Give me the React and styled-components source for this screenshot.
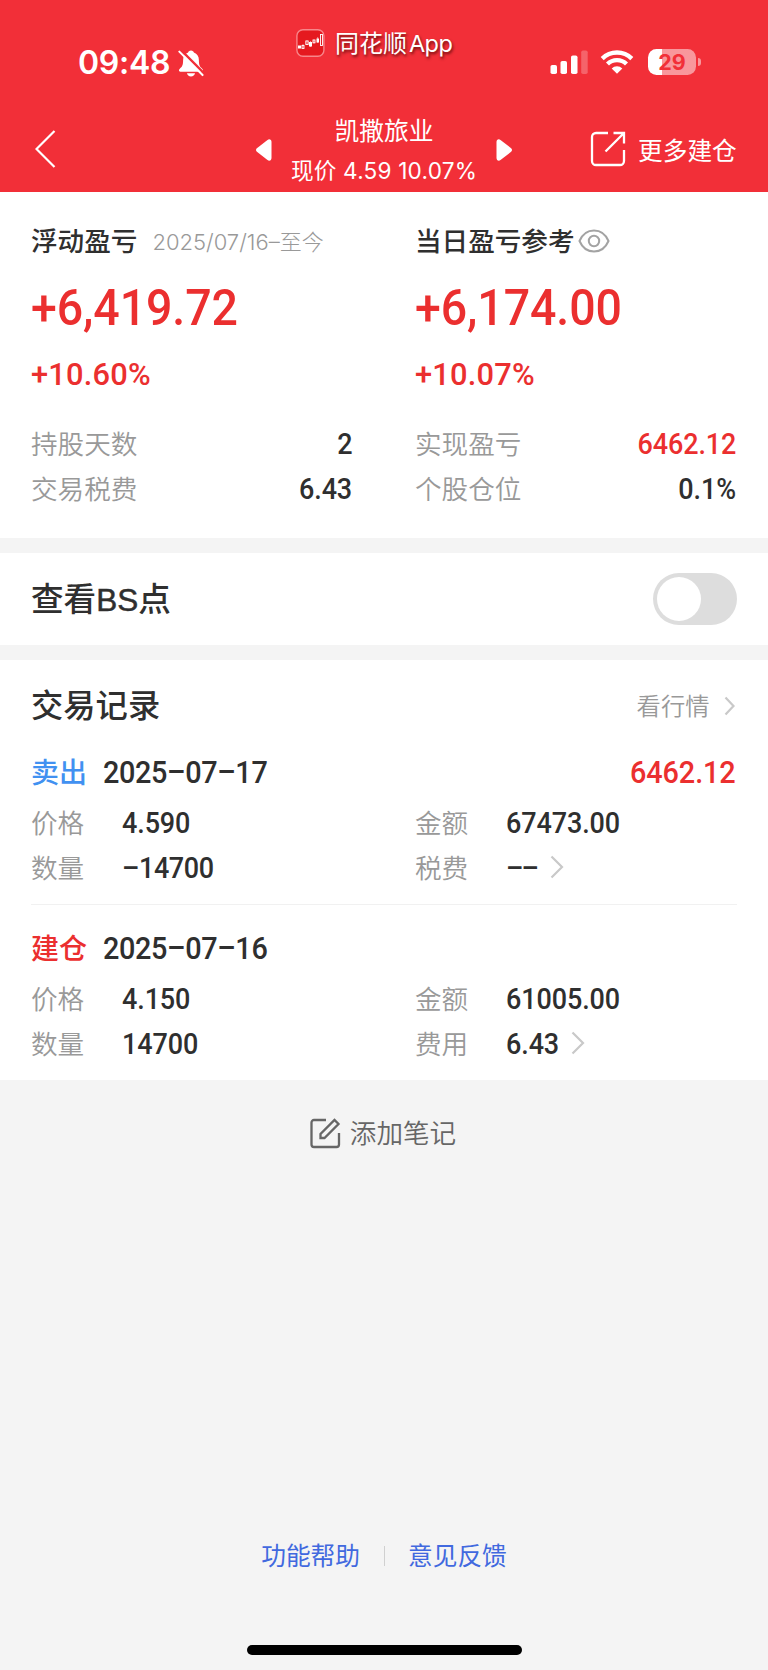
import React, { useState } from "react";
import styled, { createGlobalStyle } from "styled-components";

const cjk = '"Noto Sans CJK SC"';
const ui = `Inter, ${cjk}, sans-serif`;
const din = `Roboto, ${cjk}, sans-serif`;
const c = {
  brand: "#f22f38",
  red: "#eb2f2f",
  blue: "#4191f1",
  link: "#4169df",
  ink: "#2f2f2f",
  gray: "#999999",
  note: "#666666",
  bg: "#f4f4f4",
};

const Global = createGlobalStyle`
  * { box-sizing: border-box; }
  body { margin: 0; background: ${c.bg}; font-family: ${ui}; color: ${c.ink}; }
  svg { display: block; flex: none; }
`;

const Screen = styled.main`
  width: 768px;
  height: 1670px;
  display: flex;
  flex-direction: column;
  background: ${c.bg};
  white-space: nowrap;
  overflow: hidden;
`;

/* ---------- header ---------- */
const Header = styled.header`
  height: 192px;
  flex: none;
  background: ${c.brand};
  color: #fff;
`;
const StatusBar = styled.div`
  height: 108px;
  display: grid;
  grid-template-columns: 296px 1fr 218px;
`;
const Clock = styled.div`
  display: flex;
  align-items: center;
  gap: 8px;
  padding: 18px 0 0 78px;
  font-size: 32px;
  font-weight: 600;
  line-height: 40px;
  letter-spacing: -0.3px;
`;
const AppMark = styled.div`
  display: flex;
  align-items: center;
  gap: 10px;
  height: 28px;
  margin-top: 29px;
  font-size: 24px;
  text-shadow: 1px 2px 3px rgba(60, 0, 0, 0.75);
`;
const AppName = styled.span`
  margin-top: -3px;
`;
const AppLatin = styled.span`
  font-size: 23.5px;
  margin-left: 2px;
  letter-spacing: -0.6px;
`;
const Indicators = styled.div`
  display: flex;
  align-items: flex-start;
  padding-top: 49px;
`;
const WifiIcon = styled.svg`
  margin-left: 12px;
`;
const Battery = styled.div`
  width: 48px;
  height: 26px;
  margin-left: 14px;
  border-radius: 8.5px;
  display: grid;
  place-items: center;
  background: linear-gradient(90deg, #fff 14px, rgba(255, 255, 255, 0.5) 14px);
  color: ${c.brand};
  font-size: 21.5px;
  font-weight: 700;
  line-height: 26px;
`;
const BatteryTip = styled.div`
  width: 3px;
  height: 8px;
  margin: 9px 0 0 1.5px;
  border-radius: 0 3px 3px 0;
  background: rgba(255, 255, 255, 0.5);
`;
const NavBar = styled.nav`
  height: 84px;
  display: grid;
  grid-template-columns: 254px 1fr 254px;
`;
const Back = styled.button`
  border: 0;
  padding: 22px 0 0 35px;
  background: none;
  display: flex;
  align-items: flex-start;
`;
const StockPicker = styled.div`
  display: flex;
  justify-content: space-between;
`;
const Arrow = styled.svg`
  margin-top: 31px;
  transform: ${(p) => (p.$flip ? "scaleX(-1)" : "none")};
`;
const Stock = styled.div`
  display: flex;
  flex-direction: column;
  align-items: center;
  padding-top: 3px;
`;
const StockName = styled.div`
  font-size: 24.8px;
  line-height: 40px;
`;
const StockPrice = styled.div`
  font-size: 22.6px;
  line-height: 40px;
  letter-spacing: 0.2px;
`;
const MoreLink = styled.div`
  display: flex;
  align-items: center;
  gap: 12px;
  height: 36px;
  margin: 23px 0 0 76px;
  font-size: 24.7px;
`;
const MoreText = styled.span`
  margin-top: -1px;
`;

/* ---------- shared ---------- */
const Panel = styled.section`
  flex: none;
  height: ${(p) => p.$h}px;
  margin-bottom: ${(p) => p.$gap || 0}px;
  background: #fff;
  padding: 0 32px 0 31px;
`;
const Columns = styled.div`
  display: grid;
  grid-template-columns: 384px 1fr;
`;
const Line = styled.div`
  display: flex;
  align-items: center;
  justify-content: ${(p) => (p.$split ? "space-between" : "flex-start")};
  height: ${(p) => p.$h}px;
`;
const Label = styled.span`
  margin-top: -3px;
  font-size: 26.6px;
  font-weight: 350;
  color: ${c.gray};
  width: ${(p) => (p.$fixed ? "91px" : "auto")};
`;
const Heading = styled.h2`
  margin: ${(p) => (p.$size > 30 ? -5 : -3)}px 0 0;
  font-size: ${(p) => p.$size}px;
  font-weight: 500;
`;
const Latin = styled.span`
  font-family: "Liberation Sans", Arial, sans-serif;
  font-size: 31.5px;
  -webkit-text-stroke: 0.5px currentColor;
`;
/* slightly condensed figures; anchored to the edge they align with */
const Num = styled.span`
  font-family: ${din};
  font-size: ${(p) => p.$size || 29}px;
  font-weight: 500;
  letter-spacing: ${(p) => p.$ls ?? -0.1}px;
  color: ${(p) => (p.$red ? c.red : c.ink)};
  transform: scaleX(${(p) => p.$stretch || 0.93});
  transform-origin: ${(p) => (p.$end ? "right" : "left")} center;
`;

/* ---------- summary ---------- */
const Metric = styled.div`
  padding-top: 24px;
  width: 321px;
`;
const Range = styled.span`
  margin: -3px 0 0 15px;
  font-size: 22px;
  font-weight: 300;
  color: ${c.gray};
`;
const Rows = styled.div`
  padding-top: 24px;
`;
const EyeIcon = styled.svg`
  margin-left: 3px;
`;

/* ---------- switch ---------- */
const Switch = styled.button`
  width: 84px;
  height: 52px;
  margin-right: -1px;
  padding: 4px;
  border: 0;
  border-radius: 26px;
  background: #ddd;
  display: flex;
  justify-content: ${(p) => (p.$on ? "flex-end" : "flex-start")};
`;
const Knob = styled.span`
  width: 44px;
  height: 44px;
  border-radius: 50%;
  background: #fff;
`;

/* ---------- records ---------- */
const Quote = styled.div`
  display: flex;
  align-items: center;
  gap: 14px;
  padding-right: 1px;
  font-size: 24.3px;
  font-weight: 350;
  color: ${c.gray};
`;
const QuoteText = styled.span`
  margin-top: -2px;
`;
const Record = styled.article`
  height: ${(p) => p.$h}px;
  margin: ${(p) => p.$top}px -1px 0 0;
  border-bottom: ${(p) => (p.$rule ? "1px solid #f1f1f1" : "0")};
`;
const Side = styled.span`
  width: 72px;
  margin-top: -2px;
  font-size: 28px;
  font-weight: 500;
  color: ${(p) => (p.$sell ? c.blue : c.red)};
`;
const Grow = styled.span`
  flex: 1;
`;
const Profit = styled.span`
  display: flex;
  margin-right: 1px;
`;
const Chevron = styled.svg`
  margin-left: ${(p) => p.$ml || 0}px;
  margin-top: ${(p) => p.$mt || 0}px;
`;

/* ---------- bottom ---------- */
const AddNote = styled.div`
  height: 106px;
  display: flex;
  align-items: center;
  justify-content: center;
  gap: 9px;
  padding-right: 2px;
  font-size: 26.6px;
  font-weight: 350;
  color: ${c.note};
`;
const NoteText = styled.span`
  margin-top: -3px;
`;
const Footer = styled.footer`
  margin-top: auto;
  height: 136px;
  display: flex;
  flex-direction: column;
  align-items: center;
  justify-content: space-between;
  padding-bottom: 15px;
`;
const Links = styled.div`
  display: flex;
  align-items: center;
  gap: 23.5px;
  height: 40px;
  font-size: 24.7px;
  color: ${c.link};
`;
const Bar = styled.i`
  width: 1px;
  height: 20px;
  margin-top: 3px;
  background: #d0d0d0;
`;
const HomeBar = styled.div`
  width: 275px;
  height: 10px;
  border-radius: 5px;
  background: #000;
`;

function MiniChevron({ w, h, ml, mt }) {
  return (
    <Chevron $ml={ml} $mt={mt} width={w + 3} height={h + 3} fill="none" stroke="#c9c9c9" strokeWidth={2.2}>
      <path d={`M1.5 1.5 L${w + 1} ${h / 2 + 1.5} L1.5 ${h + 1.5}`} />
    </Chevron>
  );
}

function BellOff() {
  return (
    <svg width="26" height="27" viewBox="0 0 27 28" fill="#fff">
      <path d="M13.500 0.500c-1.700 0-2.800 1-3 2.200C7 4 5.300 6.800 5.300 10.500c0 4.800-1 6.600-2.800 8.300C1.600 19.700 1 20.600 1 21.300c0 .8.600 1.200 1.400 1.200h22.200c.8 0 1.400-.4 1.400-1.200 0-.7-.6-1.600-1.500-2.500-1.800-1.700-2.800-3.500-2.800-8.300 0-3.700-1.700-6.500-5.200-7.800-.2-1.200-1.300-2.200-3-2.200z" />
      <path d="M9.300 24.200h8.400c-.4 2-2 3.300-4.200 3.300s-3.800-1.300-4.200-3.300z" />
      <path d="M3.300 0.300 L27 24.200" stroke={c.brand} strokeWidth="2.600" />
      <path d="M1.400 1.700 L25.500 26" stroke="#fff" strokeWidth="2.100" strokeLinecap="round" />
    </svg>
  );
}

function AppIcon() {
  return (
    <svg width="29" height="28" viewBox="0 0 29 28">
      <rect x="0.900" y="0.700" width="27" height="26.600" rx="6" fill="#e5191f" stroke="#f7868a" strokeWidth="1.400" />
      <g fill="#fff">
        <rect x="2" y="16.500" width="3" height="3" />
        <rect x="13" y="13" width="3" height="4.500" />
        <rect x="20.500" y="9.500" width="2.500" height="4" />
      </g>
      <g fill="none" stroke="#fff" strokeWidth="0.900">
        <rect x="6" y="16.500" width="2" height="3" />
        <path d="M7 15v5M11 11v5M14.500 12v6M18 10.500v4M21.700 8v6" strokeWidth="0.500" />
        <rect x="9.800" y="12" width="2.400" height="3.500" />
        <rect x="17" y="11" width="2" height="2.800" />
        <rect x="24.500" y="5.500" width="2" height="11" />
      </g>
    </svg>
  );
}

function Signal() {
  return (
    <svg width="38" height="26" viewBox="0 0 38 26" fill="#fff">
      <rect x="0.500" y="16" width="6.500" height="9" rx="1.800" />
      <rect x="10.500" y="12" width="6.500" height="13" rx="1.800" />
      <rect x="21" y="6.500" width="6.500" height="18.500" rx="1.800" />
      <rect x="31.200" y="1.500" width="6.500" height="23.500" rx="1.800" opacity="0.250" />
    </svg>
  );
}

function Wifi() {
  return (
    <WifiIcon width="34" height="26" viewBox="0 0 34 26">
      <g fill="none" stroke="#fff" strokeWidth="4.300">
        <path d="M2.200 9.600 A21 21 0 0 1 31.800 9.600" />
        <path d="M7.500 15 A13.500 13.500 0 0 1 26.500 15" />
      </g>
      <path d="M17 24.700 L11.700 19.400 A7.600 7.600 0 0 1 22.300 19.400 Z" fill="#fff" />
    </WifiIcon>
  );
}

function Triangle({ flip }) {
  return (
    <Arrow $flip={flip} width="20" height="22" viewBox="0 0 20 22" fill="#fff">
      <path d="M2.900 9.200 L13.500 0.900 C15.500 -0.400 17.500 0.600 17.500 3 V19 C17.500 21.400 15.500 22.400 13.500 21.100 L2.900 12.800 C1.700 11.800 1.700 10.200 2.900 9.200 Z" />
    </Arrow>
  );
}

function Share() {
  return (
    <svg width="36" height="36" viewBox="0 0 36 36" fill="none" stroke="#fff" strokeWidth="2.300">
      <path d="M18 2 H6 a4 4 0 0 0 -4 4 V30 a4 4 0 0 0 4 4 H30 a4 4 0 0 0 4 -4 V19" />
      <path d="M23.500 2 H34 V12.500 M34 2 L15.500 20.500" />
    </svg>
  );
}

function Eye() {
  return (
    <EyeIcon width="32" height="24" viewBox="0 0 32 24" fill="none" stroke="#a3a3a3" strokeWidth="2">
      <path d="M1.500 12 C4.500 5 10 1.500 16 1.500 S27.500 5 30.500 12 C27.500 19 22 22.500 16 22.500 S4.500 19 1.500 12 Z" />
      <circle cx="16" cy="12" r="5.200" />
    </EyeIcon>
  );
}

function Pencil() {
  return (
    <svg width="31" height="31" viewBox="0 0 31 31" fill="none" stroke={c.note} strokeWidth="2.300">
      <path d="M16 2 H4 a2.500 2.500 0 0 0 -2.500 2.500 V26.500 A2.500 2.500 0 0 0 4 29 H26.500 a2.500 2.500 0 0 0 2.500 -2.500 V15" />
      <path d="M10.500 20 V16 L24.500 2 L28.500 6 L14.500 20 Z" />
    </svg>
  );
}

function Fact({ label, value, red }) {
  return (
    <Line $h={45} $split>
      <Label>{label}</Label>
      <Num $end $red={red}>{value}</Num>
    </Line>
  );
}

function Field({ label, value, ls, chevronGap }) {
  return (
    <Line $h={45}>
      <Label $fixed>{label}</Label>
      <Num $ls={ls}>{value}</Num>
      {chevronGap && <MiniChevron w={11} h={21} ml={chevronGap} mt={-2} />}
    </Line>
  );
}

function Trade({ sell, side, date, profit, fields, top, h }) {
  return (
    <Record $top={top} $h={h} $rule={sell}>
      <Line $h={56}>
        <Side $sell={sell}>{side}</Side>
        <Num $size={31} $ls={-0.4}>{date}</Num>
        <Grow />
        {profit && (
          <Profit>
            <Num $end $size={31} $red>{profit}</Num>
          </Profit>
        )}
      </Line>
      <Columns>
        {fields.map((f) => (
          <Field key={f.label} {...f} />
        ))}
      </Columns>
    </Record>
  );
}

export default function App() {
  const [on, setOn] = useState(false);
  return (
    <Screen>
      <Global />
      <Header>
        <StatusBar>
          <Clock>
            09:48
            <BellOff />
          </Clock>
          <AppMark>
            <AppIcon />
            <AppName>
              同花顺<AppLatin>App</AppLatin>
            </AppName>
          </AppMark>
          <Indicators>
            <Signal />
            <Wifi />
            <Battery>29</Battery>
            <BatteryTip />
          </Indicators>
        </StatusBar>
        <NavBar>
          <Back aria-label="返回">
            <svg width="22" height="38" viewBox="0 0 22 38" fill="none" stroke="#fff" strokeWidth="2.200">
              <path d="M19.500 1 L1.500 19 L19.500 37" />
            </svg>
          </Back>
          <StockPicker>
            <Triangle />
            <Stock>
              <StockName>凯撒旅业</StockName>
              <StockPrice>现价 4.59 10.07%</StockPrice>
            </Stock>
            <Triangle flip />
          </StockPicker>
          <MoreLink>
            <Share />
            <MoreText>更多建仓</MoreText>
          </MoreLink>
        </NavBar>
      </Header>

      <Panel $h={346} $gap={15}>
        <Columns>
          <Metric>
            <Line $h={50}>
              <Heading $size={26.6}>浮动盈亏</Heading>
              <Range>2025/07/16–至今</Range>
            </Line>
            <Line $h={84}>
              <Num $size={50} $red>+6,419.72</Num>
            </Line>
            <Line $h={47}>
              <Num $size={31.8} $stretch={0.97} $ls={0.2} $red>+10.60%</Num>
            </Line>
            <Rows>
              <Fact label="持股天数" value="2" />
              <Fact label="交易税费" value="6.43" />
            </Rows>
          </Metric>
          <Metric>
            <Line $h={50}>
              <Heading $size={26.6}>当日盈亏参考</Heading>
              <Eye />
            </Line>
            <Line $h={84}>
              <Num $size={50} $red>+6,174.00</Num>
            </Line>
            <Line $h={47}>
              <Num $size={31.8} $stretch={0.97} $ls={0.2} $red>+10.07%</Num>
            </Line>
            <Rows>
              <Fact label="实现盈亏" value="6462.12" red />
              <Fact label="个股仓位" value="0.1%" />
            </Rows>
          </Metric>
        </Columns>
      </Panel>

      <Panel $h={92} $gap={15}>
        <Line $h={92} $split>
          <Heading $size={32.6}>
            查看<Latin>BS</Latin>点
          </Heading>
          <Switch $on={on} role="switch" aria-checked={on} onClick={() => setOn(!on)}>
            <Knob />
          </Switch>
        </Line>
      </Panel>

      <Panel $h={420}>
        <Line $h={91} $split>
          <Heading $size={32.3}>交易记录</Heading>
          <Quote>
            <QuoteText>看行情</QuoteText>
            <MiniChevron w={8.5} h={17} />
          </Quote>
        </Line>
        <Trade
          sell
          top={-7}
          h={161}
          side="卖出"
          date="2025–07–17"
          profit="6462.12"
          fields={[
            { label: "价格", value: "4.590" },
            { label: "金额", value: "67473.00" },
            { label: "数量", value: "–14700", ls: -0.4 },
            { label: "税费", value: "––", ls: -2, chevronGap: 11 },
          ]}
        />
        <Trade
          top={15}
          h={160}
          side="建仓"
          date="2025–07–16"
          fields={[
            { label: "价格", value: "4.150" },
            { label: "金额", value: "61005.00" },
            { label: "数量", value: "14700" },
            { label: "费用", value: "6.43", chevronGap: 7.5 },
          ]}
        />
      </Panel>

      <AddNote>
        <Pencil />
        <NoteText>添加笔记</NoteText>
      </AddNote>

      <Footer>
        <Links>
          <span>功能帮助</span>
          <Bar />
          <span>意见反馈</span>
        </Links>
        <HomeBar />
      </Footer>
    </Screen>
  );
}
